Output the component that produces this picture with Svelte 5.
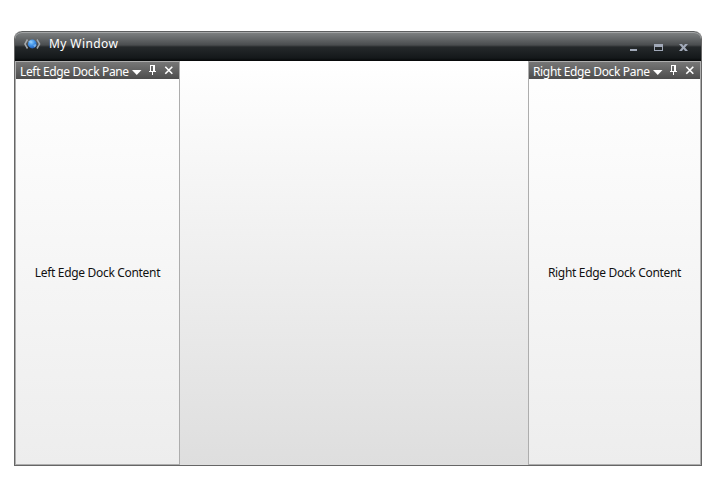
<script>
  const panes = [
    { side: 'left', title: 'Left Edge Dock Pane', content: 'Left Edge Dock Content' },
    { side: 'right', title: 'Right Edge Dock Pane', content: 'Right Edge Dock Content' }
  ];
</script>

{#snippet pane(p)}
  <section class="pane {p.side}">
    <header>
      <span class="label">{p.title}</span>
      <svg class="tools" width="42" height="17" viewBox="0 0 42 17">
        <path d="M0 8h9.500L4.750 13z" fill="#fff" />
        <path d="M18 3h5v6h1v1h-3v3h-1v-3h-3V9h1zM19 4v5h2V4z" fill="#fff" fill-rule="evenodd" />
        <path d="M33.300 4.800l7 7M40.300 4.800l-7 7" stroke="#fff" stroke-width="1.600" />
      </svg>
    </header>
    <div class="content"><span>{p.content}</span></div>
  </section>
{/snippet}

<div class="desktop">
  <div class="window">
    <div class="titlebar">
      <svg class="logo" width="18" height="14" viewBox="0 0 18 14">
        <defs>
          <radialGradient id="globe" cx=".4" cy=".3" r=".75">
            <stop offset="0" stop-color="#8accff" />
            <stop offset=".5" stop-color="#3f90e6" />
            <stop offset="1" stop-color="#1d56ad" />
          </radialGradient>
        </defs>
        <path d="M3.500 2.500L.9 7l2.600 4.500M13 2.500L15.600 7 13 11.500" fill="none" stroke="#a4a8ab" stroke-width="1.500" />
        <circle cx="8.300" cy="7" r="4.400" fill="url(#globe)" />
        <path d="M4 4l3-.5 1 1.500-2 1zM9.300 8l2.500-1 .5 2-2 1.500z" fill="#a0d2fa" opacity=".6" />
      </svg>
      <span class="title">My Window</span>
      <svg class="controls" width="60" height="12" viewBox="0 0 60 12">
        <path d="M1 8h7v2H1z" fill="#a1a9b8" />
        <path d="M25 3h9v7h-9zM26 6v3h7V6z" fill="#a1a9b8" fill-rule="evenodd" />
        <path d="M50 3h3l1.500 2L56 3h3l-3 3.500 3 3.500h-3l-1.500-2L53 10h-3l3-3.500z" fill="#a1a9b8" />
      </svg>
    </div>
    <main>
      {@render pane(panes[0])}
      <div class="workspace"></div>
      {@render pane(panes[1])}
    </main>
  </div>
</div>

<style>
  :global(body) { background: #fff; }
  .desktop {
    box-sizing: border-box;
    width: 715px;
    height: 500px;
    padding: 31px 13px 34px 14px;
    font: 12px/16px "Noto Sans", "Open Sans", sans-serif;
  }
  .window {
    box-sizing: border-box;
    display: flex;
    flex-direction: column;
    height: 435px;
    border: 1px solid #666;
    border-top: 0;
    border-radius: 8px 8px 0 0;
    overflow: hidden;
  }
  .titlebar {
    box-sizing: border-box;
    display: flex;
    flex: 0 0 30px;
    padding-left: 9px;
    border-top: 1px solid #5d5f60;
    border-radius: 7px 7px 0 0;
    box-shadow: inset 0 1px #a4a6a7;
    background: linear-gradient(#808384 0, #4a4d4f 13px, #25292b 15px, #14181a 26px, #050708 29px);
  }
  .logo { margin-top: 5px; }
  .title { margin: 4px 0 0 7px; color: #fff; white-space: nowrap; letter-spacing: .4px; }
  .controls { margin: 9px 12px 0 auto; }
  main { display: flex; flex: 1; min-height: 0; }
  .workspace { flex: 1; background: linear-gradient(#fff, #dedede); }
  .pane {
    box-sizing: border-box;
    display: flex;
    flex-direction: column;
    border: 1px solid #adadad;
    background: linear-gradient(#fff, #ededed);
  }
  .left { width: 165px; }
  .right { width: 173px; }
  header {
    display: flex;
    flex: 0 0 17px;
    background: linear-gradient(#777, #4c4c4c);
    color: #fff;
  }
  .label { margin: 2px 0 -1px 4px; width: 112px; white-space: nowrap; letter-spacing: -.35px; }
  .right .label { width: 120px; }
  .tools { flex: none; }
  .content {
    display: flex;
    flex: 1;
    align-items: center;
    justify-content: center;
    padding-top: 2px;
    color: #111;
    white-space: nowrap;
    letter-spacing: -.32px;
  }
</style>
